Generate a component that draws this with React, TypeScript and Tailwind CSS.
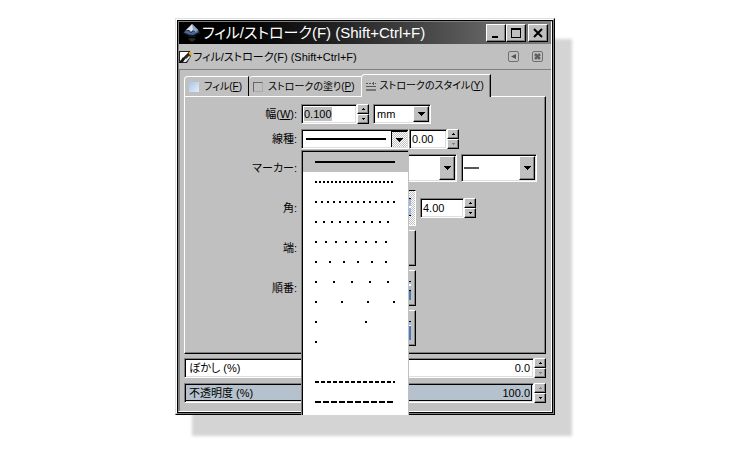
import { useState } from 'react';
import type { ReactNode } from 'react';

const SUNKEN = 'border border-t-[#808080] border-l-[#808080] border-r-white border-b-white p-px shadow-[inset_1px_1px_0_#000,inset_-1px_-1px_0_#dfdfdf]';
const RAISED = 'border border-t-white border-l-white border-r-black border-b-black bg-[#c0c0c0] shadow-[inset_-1px_-1px_0_#808080]';
const CHECKED = 'bg-[repeating-conic-gradient(#c0c0c0_0_25%,#fff_0_50%)] bg-[length:2px_2px]';

// dash = mark length, gap = space between marks, len = drawn length
const LINE_STYLES = [
  { name: 'Solid', dash: 80, gap: 0, len: 80 },
  { name: 'Dots 1', dash: 2, gap: 2, len: 78 },
  { name: 'Dots 2', dash: 2, gap: 4, len: 80 },
  { name: 'Dots 3', dash: 2, gap: 6, len: 74 },
  { name: 'Dots 4', dash: 2, gap: 8, len: 72 },
  { name: 'Dots 5', dash: 2, gap: 12, len: 72 },
  { name: 'Dots 6', dash: 2, gap: 16, len: 74 },
  { name: 'Dots 7', dash: 2, gap: 24, len: 80 },
  { name: 'Dots 8', dash: 2, gap: 48, len: 80 },
  { name: 'Dots 9', dash: 2, gap: 98, len: 80 },
  { name: 'Empty', dash: 0, gap: 80, len: 0 },
  { name: 'Dashes 1', dash: 4, gap: 2, len: 80 },
  { name: 'Dashes 2', dash: 6, gap: 2, len: 78 },
];

// ── Icons ───────────────────────────────────────────────────────
function Logo() {
  return (
    <svg className="h-5 w-5 shrink-0" viewBox="0 0 20 20">
      <path d="M10 1 1 9.500Q1 11 5 12L7 14H13L14 12 18 10.500 18 9Z" fill="#10151f" />
      <path d="M10 1 4 7 7 7 9 9 11 7 14 9 16 7Z" fill="#d9e2f2" />
      <path d="M10 1 16 7 14 9 11 7Z" fill="#8fa3c4" />
      <path d="M4 7 2 9.500Q7 12 11 12L17 9 16 7 14 9 11 8 9 10 7 8Z" fill="#4a6796" />
      <path d="M6 16Q10 14 14 16L10 19Z" fill="#2a2a2a" />
    </svg>
  );
}
function BrushIcon() {
  return (
    <svg className="h-3.5 w-3.5 shrink-0" viewBox="0 0 14 14">
      <path d="M0 1H11L12 6 8 13H0Z" fill="#222" />
      <path d="M1 2H10L5 7 3 10 1 11Z" fill="#fff" />
      <path d="M5 10 10 5 11 7 7 12H4Z" fill="#e8e8e8" />
      <path d="M0 13 4 7 6 9 3 13Z" fill="#111" />
      <path d="M5 7 10 2 12 4 7 9Z" fill="#2a2a2a" />
      <path d="M10 2 12 2 13 5 12 6 10 4Z" fill="#eda91c" />
    </svg>
  );
}
function DockIcon({ close = false }: { close?: boolean }) {
  return (
    <svg className="h-3 w-3" viewBox="0 0 12 12" fill="none" stroke="#707070">
      <rect x="0.5" y="0.5" width="10" height="10" rx="1.5" />
      {close ? <path d="M3 3 8 8M8 3 3 8" strokeWidth="2.500" stroke="#606060" /> : <path d="M8 3V8L3 5.500Z" fill="#555" stroke="none" />}
    </svg>
  );
}
function WindowIcon({ kind }: { kind: string }) {
  return (
    <svg className="h-3 w-3" viewBox="0 0 12 12" fill="none" stroke="#000" shapeRendering="crispEdges">
      {kind === 'minimize' && <path d="M2 10H8" strokeWidth="2" />}
      {kind === 'maximize' && <path d="M1.500 2V11M10.500 2V11M1 10.500H11" />}
      {kind === 'maximize' && <path d="M1 2H11" strokeWidth="2" />}
      {kind === 'close' && <path d="M2 2 10 10M10 2 2 10" strokeWidth="2" shapeRendering="auto" />}
    </svg>
  );
}
function StrokeStyleIcon() {
  return (
    <svg className="h-2.5 w-2.5 shrink-0" viewBox="0 0 10 10" stroke="#555" shapeRendering="crispEdges">
      <path d="M0 2.500H10" strokeDasharray="2 1" />
      <path d="M0 5.500H10" />
      <path d="M0 9H10" strokeWidth="2" stroke="#777" />
      <path d="M7.500 1V4" />
    </svg>
  );
}
function Arrow({ up = false, off = false, big = false }: { up?: boolean; off?: boolean; big?: boolean }) {
  const fill = off ? '#808080' : '#000';
  if (big) {
    return <svg className="h-1 w-[7px]" viewBox="0 0 7 4" shapeRendering="crispEdges"><path d="M0 0H7V1H6V2H5V3H4V4H3V3H2V2H1V1H0Z" fill={fill} /></svg>;
  }
  return (
    <svg className="h-0.5 w-[3px]" viewBox="0 0 3 2" shapeRendering="crispEdges">
      <path d={up ? 'M1 0H2V1H3V2H0V1H1Z' : 'M0 0H3V1H2V2H1V1H0Z'} fill={fill} />
    </svg>
  );
}
function Dashes({ dash, gap, len }: { dash: number; gap: number; len: number }) {
  return (
    <svg className="block h-0.5 w-20" viewBox="0 0 80 2" shapeRendering="crispEdges">
      {len > 0 && <line x1="0" y1="1" x2={len} y2="1" stroke="#000" strokeWidth="2" strokeDasharray={gap ? `${dash} ${gap}` : undefined} />}
    </svg>
  );
}
// drawing on the toggle buttons: line join, or fill / stroke / marker order
function NodeIcon({ kind }: { kind: string }) {
  return (
    <svg className="ml-auto h-6 w-7 shrink-0" viewBox="0 0 28 24" shapeRendering="crispEdges">
      {kind === 'join' && <path d="M2 3H28V20H2Z" fill="#9bb9de" />}
      {kind === 'join' && <path d="M20 10H28V12H20Z" fill="#fff" />}
      {kind === 'join' && <path d="M2 2H28V3H2ZM2 19H28V20H2Z" fill="#000" />}
      {kind === 'order' && <path d="M2 5H28V14H2Z" fill="#9bb9de" />}
      {kind === 'order' && <path d="M2 15H28V24H2Z" fill="#4a7ab5" />}
      {kind === 'order' && <path d="M20 8H28V10H20Z" fill="#fff" />}
      {kind === 'order' && <path d="M2 5H28V6H2ZM2 14H28V15H2Z" fill="#000" />}
      {kind === 'back' && <path d="M2 6H28V9H2Z" fill="#9bb9de" />}
      {kind === 'back' && <path d="M2 10H28V24H2Z" fill="#4a7ab5" />}
      {kind === 'back' && <path d="M2 9H28V10H2Z" fill="#fff" />}
      {kind === 'back' && <path d="M2 5H28V6H2Z" fill="#000" />}
    </svg>
  );
}

// ── Controls ────────────────────────────────────────────────────
function Steps({ upOff, downOff }: { upOff?: boolean; downOff?: boolean }) {
  return (
    <span className="flex w-3 shrink-0 flex-col">
      <button aria-label="Increase" disabled={upOff} className={`flex flex-1 items-center justify-center ${RAISED}`}><Arrow up off={upOff} /></button>
      <button aria-label="Decrease" disabled={downOff} className={`flex flex-1 items-center justify-center ${RAISED}`}><Arrow off={downOff} /></button>
    </span>
  );
}

function Spin({ id, label, value, width, selected, downOff }: { id: string; label?: string; value: string; width: string; selected?: boolean; downOff?: boolean }) {
  return (
    <span className="flex h-5">
      <span className={`flex items-center bg-white ${SUNKEN} ${width}`}>
        <input id={id} aria-label={label} defaultValue={value}
          className={`h-3.5 min-w-0 outline-none ${selected ? 'ml-px w-7 bg-[#c0c0c0]' : 'w-full pl-px'}`} />
      </span>
      <Steps downOff={downOff} />
    </span>
  );
}

function MarkerButton({ id, label }: { id?: string; label: string }) {
  return (
    <button id={id} aria-label={label} className={`flex h-7 w-[76px] items-center bg-white ${SUNKEN}`}>
      <svg className="ml-px h-0.5 w-[15px]" viewBox="0 0 15 2"><path d="M0 0H15V2H0Z" fill="#555" /></svg>
      <span className={`ml-auto flex h-full w-4 items-center justify-center ${RAISED}`}><Arrow big /></span>
    </button>
  );
}

function Row({ label, children, className = '' }: { label?: ReactNode; children?: ReactNode; className?: string }) {
  return (
    <div className={`grid grid-cols-[112px_1fr] gap-x-1 ${className}`}>
      <div className="self-center text-right">{label}</div>
      <div className="flex items-center">{children}</div>
    </div>
  );
}

function Toggles({ name, kind, active }: { name: string; kind: string; active?: number }) {
  return (
    <div className="flex h-9 gap-0.5">
      {[0, 1, 2].map(i => (
        <button key={i} aria-label={`${name} ${i + 1}`} aria-pressed={i === active}
          className={`flex w-[37px] items-center pr-1 ${i === active ? `border border-t-black border-l-black border-r-white border-b-white ${CHECKED}` : RAISED}`}>
          <NodeIcon kind={kind} />
        </button>
      ))}
    </div>
  );
}

function Meter({ id, label, value, filled }: { id: string; label: string; value: string; filled?: boolean }) {
  return (
    <div className="flex h-5">
      <div className={`flex min-w-0 flex-1 bg-white ${SUNKEN}`}>
        <div className={`flex min-w-0 flex-1 items-center justify-between pl-[3px] ${filled ? 'border-r border-b border-black bg-[#b5c2cd] pr-px' : 'pr-0.5'}`}>
          <label htmlFor={id}>{label}</label>
          <input id={id} defaultValue={value} className="h-4 w-12 bg-transparent text-right outline-none" />
        </div>
      </div>
      <Steps upOff={filled} downOff={!filled} />
    </div>
  );
}

export default function App() {
  const [line, setLine] = useState(0);
  const [open, setOpen] = useState(true);

  return (
    <main className="flex min-h-screen justify-center bg-white pt-[18px] text-[11px] leading-4 text-black [font-family:'Liberation_Sans','Noto_Sans_CJK_JP',sans-serif] [font-feature-settings:'palt']">
      <section className="w-full max-w-[380px] self-start border border-t-[#dfdfdf] border-l-[#dfdfdf] border-r-black border-b-black bg-[#c0c0c0] shadow-[17px_21px_3px_#d4d4d4]">
        <div className="border border-t-white border-l-white border-r-[#808080] border-b-[#808080]">
          <div className="border border-black">
            <div className="border border-t-[#808080] border-l-[#808080] border-r-white border-b-white">
              <header className="flex h-[22px] items-center bg-linear-to-r from-black to-[#808080] pr-[3px] pl-[3px] text-white">
                <Logo />
                <h1 className="flex-1 truncate text-[15px] leading-5">フィル/ストローク(F) (Shift+Ctrl+F)</h1>
                <button aria-label="Minimize" className={`flex h-[18px] w-5 items-center justify-center ${RAISED}`}><WindowIcon kind="minimize" /></button>
                <button aria-label="Maximize" className={`flex h-[18px] w-5 items-center justify-center ${RAISED}`}><WindowIcon kind="maximize" /></button>
                <button aria-label="Close" className={`ml-0.5 flex h-[18px] w-5 items-center justify-center ${RAISED}`}><WindowIcon kind="close" /></button>
              </header>

              <div className="flex h-[25px] items-center pr-[7px]">
                <BrushIcon />
                <h2 className="flex-1">フィル/ストローク(F) (Shift+Ctrl+F)</h2>
                <button aria-label="Dock"><DockIcon /></button>
                <button aria-label="Close panel" className="ml-3"><DockIcon close /></button>
              </div>

              <div className="border-t border-l border-[#808080] pt-1 pr-[5px] pb-2 pl-1">
                {/* Tabs */}
                <div role="tablist" className="flex items-end text-[10px]">
                  <button role="tab" className="flex h-5 items-center gap-[5px] rounded-tl-sm border-t border-r border-l border-t-white border-r-black border-l-white pr-1.5 pl-1">
                    <span className="h-2.5 w-2.5 bg-linear-to-br from-[#a9c6e8] to-[#e6eef7]" />
                    <span>フィル(<u>F</u>)</span>
                  </button>
                  <button role="tab" className="flex h-5 items-center gap-[5px] rounded-tl-sm border-t border-white pr-1.5 pl-1">
                    <span className="h-2.5 w-2.5 border border-t-[#666] border-r-[#aaa] border-b-[#aaa] border-l-[#666]" />
                    <span>ストロークの塗り(<u>P</u>)</span>
                  </button>
                  <button role="tab" aria-selected="true" className="relative -mb-px flex h-[23px] items-center gap-1 rounded-tl-sm border-t border-r border-l border-t-white border-r-black border-l-white bg-[#c0c0c0] pr-1.5 pl-1 shadow-[inset_-1px_0_0_#808080]">
                    <StrokeStyleIcon />
                    <span>ストロークのスタイル(<u>Y</u>)</span>
                  </button>
                </div>

                <div className="border border-t-white border-l-white border-r-black border-b-black pt-[7px] pb-[7px] shadow-[inset_-1px_-1px_0_#808080]">
                  <Row className="mb-[5px] h-5" label={<label htmlFor="width">幅(<u>W</u>):</label>}>
                    <Spin id="width" value="0.100" width="w-14" selected />
                    <span className={`ml-1 flex h-5 w-[58px] bg-white ${SUNKEN}`}>
                      <select aria-label="Unit" className="min-w-0 flex-1 appearance-none pl-0.5 outline-none">
                        <option>mm</option>
                        <option>px</option>
                      </select>
                      <span className={`pointer-events-none flex w-4 items-center justify-center ${RAISED}`}><Arrow big /></span>
                    </span>
                  </Row>

                  <Row className="mb-[5px] h-5" label={<label htmlFor="line">線種:</label>}>
                    <div className="relative">
                      <button id="line" aria-haspopup="listbox" aria-expanded={open} onClick={() => setOpen(!open)}
                        className={`flex h-5 w-[108px] items-center bg-white pl-1 ${SUNKEN}`}>
                        <Dashes {...LINE_STYLES[line]} />
                        <span className={`ml-auto flex h-full w-4 items-center justify-center border-t border-l border-black ${CHECKED}`}><Arrow big /></span>
                      </button>
                      {open && (
                        <ul role="listbox" className="absolute top-full left-0 z-10 mt-px w-[108px] border-t border-r border-l border-t-[#808080] border-r-[#c0c0c0] border-l-[#808080] bg-white pb-[3px]">
                          {LINE_STYLES.map((s, i) => (
                            <li key={s.name} role="option" aria-label={s.name} aria-selected={i === line}
                              onClick={() => { setLine(i); setOpen(false); }}
                              className={`flex h-5 items-center border-l border-black pl-3 first:h-[21px] first:border-t ${i === line ? 'bg-[#c0c0c0]' : ''}`}>
                              <Dashes {...s} />
                            </li>
                          ))}
                          <li aria-hidden="true" className="-mb-[3px] h-[3px] border-l border-black" />
                        </ul>
                      )}
                    </div>
                    <Spin id="offset" label="Dash offset" value="0.00" width="w-[38px]" downOff />
                  </Row>

                  <Row className="mb-2 h-7" label={<label htmlFor="marker">マーカー:</label>}>
                    <div className="flex gap-1">
                      <MarkerButton id="marker" label="Start marker" />
                      <MarkerButton label="Mid marker" />
                      <MarkerButton label="End marker" />
                    </div>
                  </Row>

                  <Row className="mb-1" label={<label htmlFor="miter">角:</label>}>
                    <Toggles name="Join" kind="join" active={2} />
                    <span className="ml-1"><Spin id="miter" value="4.00" width="w-11" /></span>
                  </Row>
                  <Row className="mb-1" label="端:"><Toggles name="Cap" kind="cap" /></Row>
                  <Row className="mb-1" label="順番:"><Toggles name="Order" kind="order" /></Row>
                  <Row><Toggles name="Order back" kind="back" /></Row>
                </div>

                <div className="mt-1 flex flex-col gap-[5px]">
                  <Meter id="blur" label="ぼかし (%)" value="0.0" />
                  <Meter id="opacity" label="不透明度 (%)" value="100.0" filled />
                </div>
              </div>
            </div>
          </div>
        </div>
      </section>
    </main>
  );
}
